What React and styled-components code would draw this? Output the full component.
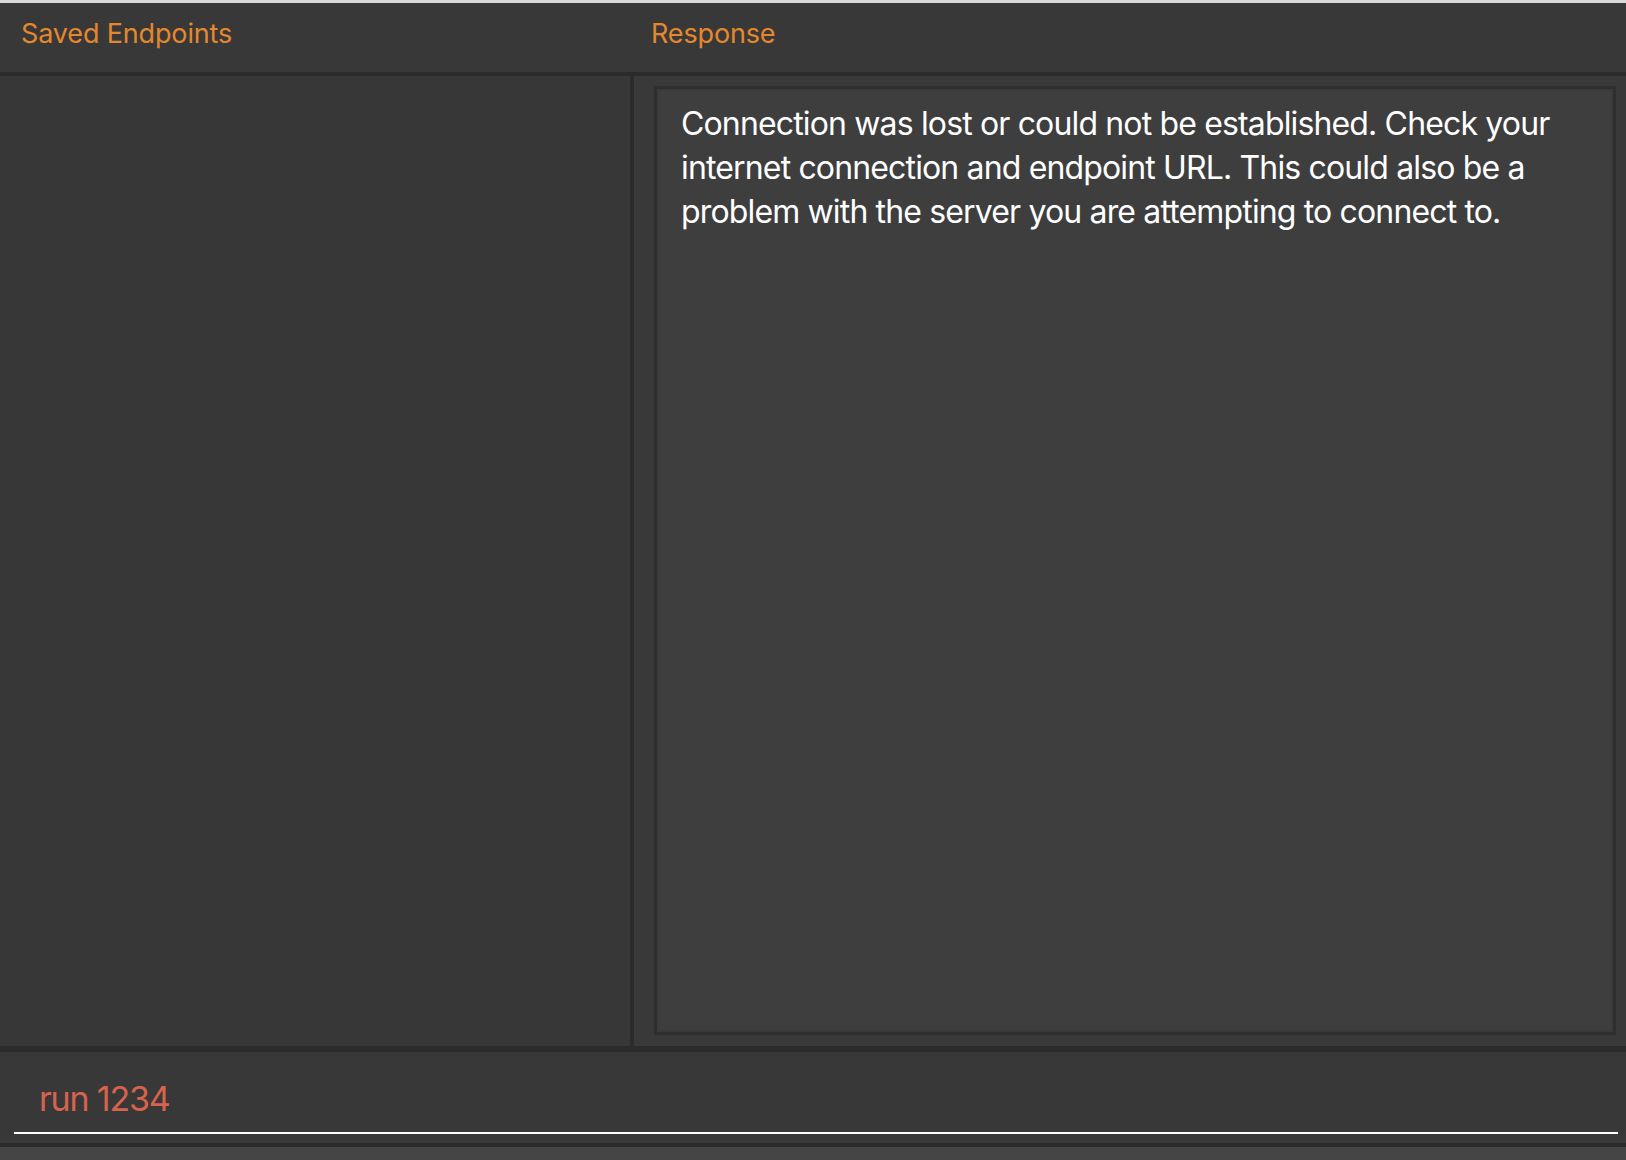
import React from "react";
import styled, { createGlobalStyle } from "styled-components";

const GlobalStyle = createGlobalStyle`
  html, body {
    margin: 0;
    padding: 0;
    background: #383838;
  }
  #root {
    height: 100vh;
  }
`;

// Ventana principal
const Window = styled.div`
  display: flex;
  flex-direction: column;
  height: 100vh;
  box-sizing: border-box;
  border-top: 3px solid #d9d9d9;
  background: #383838;
  font-family: "Inter", "Liberation Sans", sans-serif;
  overflow: hidden;
`;

const Header = styled.div`
  display: grid;
  grid-template-columns: 630px 1fr;
  height: 69px;
  flex-shrink: 0;
  background: #383838;
`;

const HeaderTitle = styled.div`
  display: flex;
  align-items: center;
  padding: 0 0 8px 21px;
  font-size: 27px;
  font-weight: 400;
  letter-spacing: -0.15px;
  color: #e5882d;
`;

const HDivider = styled.div`
  height: ${(p) => p.$size}px;
  flex-shrink: 0;
  background: #2b2b2b;
`;

const Main = styled.div`
  flex: 1;
  display: grid;
  grid-template-columns: 630px 4px 1fr;
  min-height: 0;
`;

const Sidebar = styled.div`
  background: #373737;
`;

const VDivider = styled.div`
  background: #2b2b2b;
`;

const ResponsePanel = styled.div`
  display: flex;
  padding: 10px 10px 11px 20px;
  background: #393939;
`;

const ResponseBox = styled.div`
  flex: 1;
  box-sizing: border-box;
  border: 3px solid #2e2e2e;
  box-shadow: inset 0 0 0 2px #3a3a3a;
  background: #3e3e3e;
  padding: 13px 24px;
  color: #ffffff;
  font-size: 32px;
  line-height: 44px;
  letter-spacing: -0.85px;
`;

const InputArea = styled.div`
  display: flex;
  flex-direction: column;
  justify-content: flex-end;
  box-sizing: border-box;
  height: 91px;
  flex-shrink: 0;
  padding: 0 8px 9px 14px;
  background: #383838;
`;

const CommandInput = styled.div`
  padding: 0 0 13px 25px;
  border-bottom: 2px solid #ffffff;
  font-size: 34px;
  line-height: 40px;
  letter-spacing: -1.2px;
  color: #d7634d;
`;

const StatusStrip = styled.div`
  height: 13px;
  flex-shrink: 0;
  background: #454545;
`;

const App = () => {
  return (
    <>
      <GlobalStyle />
      <Window>
        <Header>
          <HeaderTitle>Saved Endpoints</HeaderTitle>
          <HeaderTitle>Response</HeaderTitle>
        </Header>
        <HDivider $size={4} />
        <Main>
          <Sidebar />
          <VDivider />
          <ResponsePanel>
            <ResponseBox>
              Connection was lost or could not be established. Check your
              internet connection and endpoint URL. This could also be a
              problem with the server you are attempting to connect to.
            </ResponseBox>
          </ResponsePanel>
        </Main>
        <HDivider $size={6} />
        <InputArea>
          <CommandInput>run 1234</CommandInput>
        </InputArea>
        <HDivider $size={4} />
        <StatusStrip />
      </Window>
    </>
  );
};

export default App;
